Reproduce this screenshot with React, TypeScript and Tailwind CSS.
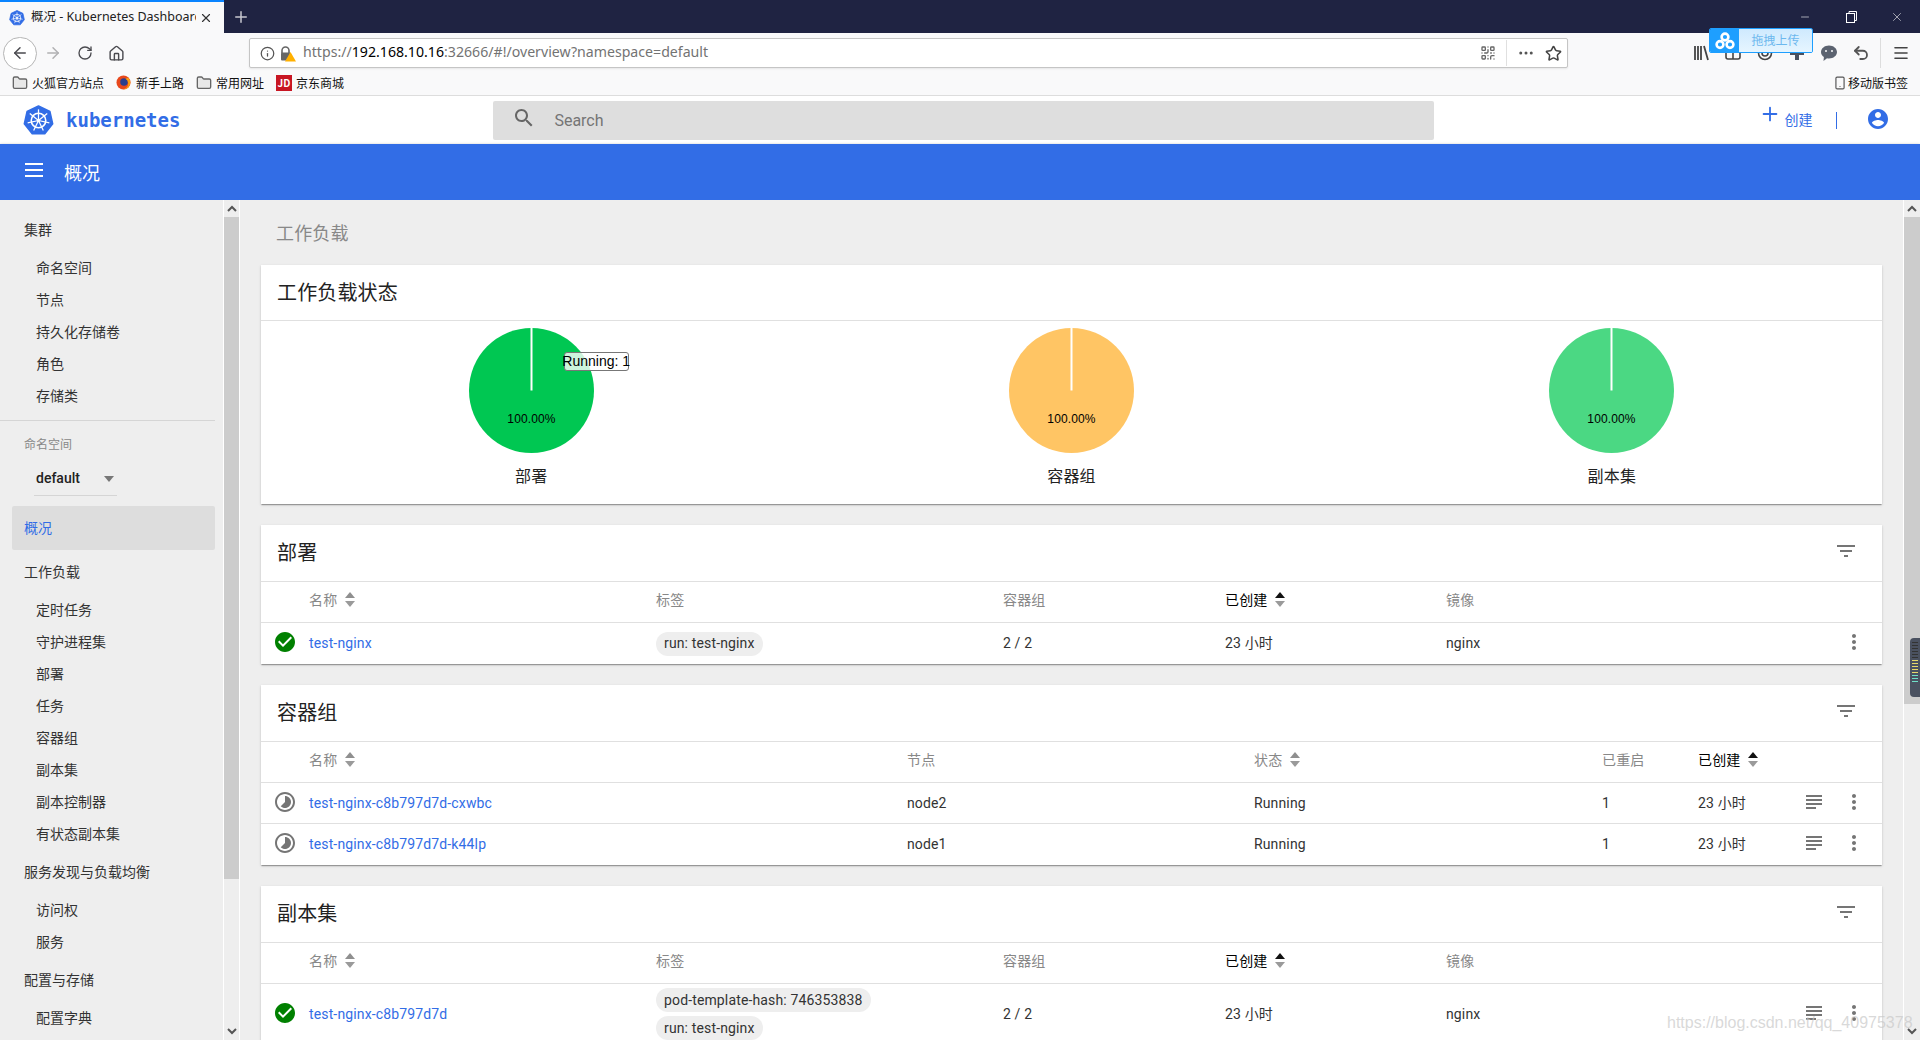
import React from 'react';
import { ArrowLeft, ArrowRight, RotateCw, Home, Info, Star, Ellipsis, QrCode, Undo2, Menu, Plus, X, Folder, Smartphone, Minus } from 'lucide-react';

const K8sLogo = ({ size, fill = '#326de6' }: { size: number; fill?: string }) => {
  const spokes = Array.from({ length: 7 }, (_, i) => {
    const a = ((-90 + i * (360 / 7)) * Math.PI) / 180;
    return { x: 16 + 11.5 * Math.cos(a), y: 16 + 11.5 * Math.sin(a) };
  });
  return (
    <svg width={size} height={size} viewBox="0 0 32 32">
      <polygon points="16,1 27.8,6.7 30.7,19.4 22.5,29.6 9.5,29.6 1.3,19.4 4.2,6.7" fill={fill} stroke={fill} strokeWidth="1.5" strokeLinejoin="round" />
      <circle cx="16" cy="16" r="7.5" fill="none" stroke="#fff" strokeWidth="1.6" />
      <circle cx="16" cy="16" r="1.8" fill="#fff" />
      {spokes.map((p, i) => (
        <line key={i} x1="16" y1="16" x2={p.x} y2={p.y} stroke="#fff" strokeWidth="1.3" />
      ))}
    </svg>
  );
};

const MatIcon = ({ d, size = 24, className }: { d: string; size?: number; className?: string }) => (
  <svg width={size} height={size} viewBox="0 0 24 24" className={className} fill="currentColor">
    <path d={d} />
  </svg>
);

const CHECK = 'M12 2C6.48 2 2 6.48 2 12s4.48 10 10 10 10-4.48 10-10S17.52 2 12 2zm-2 15l-5-5 1.41-1.41L10 14.17l7.59-7.59L19 8l-9 9z';
const TIMELAPSE = 'M16.24 7.76C15.07 6.59 13.54 6 12 6v6l-4.24 4.24c2.34 2.34 6.14 2.34 8.49 0 2.34-2.34 2.34-6.14-.01-8.48zM12 2C6.48 2 2 6.48 2 12s4.48 10 10 10 10-4.48 10-10S17.52 2 12 2zm0 18c-4.42 0-8-3.58-8-8s3.58-8 8-8 8 3.58 8 8-3.58 8-8 8z';
const ACCOUNT = 'M12 2C6.48 2 2 6.48 2 12s4.48 10 10 10 10-4.48 10-10S17.52 2 12 2zm0 3c1.66 0 3 1.34 3 3s-1.34 3-3 3-3-1.34-3-3 1.34-3 3-3zm0 14.2c-2.5 0-4.71-1.28-6-3.22.03-1.99 4-3.08 6-3.08 1.99 0 5.97 1.09 6 3.08-1.29 1.94-3.5 3.22-6 3.22z';
const FILTER = 'M10 18h4v-2h-4v2zM3 6v2h18V6H3zm3 7h12v-2H6v2z';
const SUBJECT = 'M14 17H4v2h10v-2zm6-8H4v2h16V9zM4 15h16v-2H4v2zM4 5v2h16V5H4z';
const DOTS = 'M12 8c1.1 0 2-.9 2-2s-.9-2-2-2-2 .9-2 2 .9 2 2 2zm0 2c-1.1 0-2 .9-2 2s.9 2 2 2 2-.9 2-2-.9-2-2-2zm0 6c-1.1 0-2 .9-2 2s.9 2 2 2 2-.9 2-2-.9-2-2-2z';
const SEARCH = 'M15.5 14h-.79l-.28-.27C15.41 12.59 16 11.11 16 9.5 16 5.91 13.09 3 9.5 3S3 5.91 3 9.5 5.91 16 9.5 16c1.61 0 3.09-.59 4.23-1.57l.27.28v.79l5 4.99L20.49 19l-4.99-5zm-6 0C7.01 14 5 11.99 5 9.5S7.01 5 9.5 5 14 7.01 14 9.5 11.99 14 9.5 14z';

const Sort = ({ active }: { active?: boolean }) => (
  <svg width="10" height="15" viewBox="0 0 10 15" className="ml-2 mb-[2px]">
    <polygon points="5,0 10,6 0,6" fill={active ? '#111' : '#8f8f8f'} />
    <polygon points="0,9 10,9 5,15" fill="#9a9a9a" />
  </svg>
);

const Th = ({ label, sort, active }: { label: string; sort?: boolean; active?: boolean }) => (
  <div className={`flex items-center pb-[3px] ${active ? 'text-black' : 'text-[#888]'}`}>
    {label}
    {sort && <Sort active={active} />}
  </div>
);

const Chip = ({ text }: { text: string }) => (
  <span className="inline-flex h-6 items-center rounded-xl bg-[#eee] px-2 text-[#333]">{text}</span>
);

const CardHeader = ({ title }: { title: string }) => (
  <div className="flex h-[57px] items-center justify-between border-b border-[#e0e0e0] pl-4 pr-[27px]">
    <h2 className="text-[20px] font-normal text-[#222]">{title}</h2>
    <MatIcon d={FILTER} className="mb-1 -mr-[3px] text-[#757575]" />
  </div>
);

const RowIcons = ({ logs }: { logs?: boolean }) => (
  <>
    <div className="flex items-center justify-center text-[#757575]">
      {logs && <MatIcon d={SUBJECT} className="mb-[3px]" />}
    </div>
    <div className="flex items-center justify-center text-[#757575]">
      <MatIcon d={DOTS} className="mb-[3px]" />
    </div>
  </>
);

const Pie = ({ color, label, tooltip }: { color: string; label: string; tooltip?: boolean }) => (
  <div className="flex flex-col items-center pt-[7px]">
    <div className="relative h-[125px] w-[125px]">
      <svg width="125" height="125" viewBox="0 0 125 125">
        <circle cx="62.5" cy="62.5" r="62.5" fill={color} />
        <line x1="62.5" y1="0" x2="62.5" y2="62.5" stroke="#fff" strokeWidth="2" />
        <text x="62.5" y="95" textAnchor="middle" fontSize="12" fill="#000" fontFamily="Liberation Sans, sans-serif">100.00%</text>
      </svg>
      {tooltip && (
        <div className="absolute left-[95px] top-6 flex h-[19px] w-[65px] items-center justify-center whitespace-nowrap rounded-[3px] border border-[#777] bg-white/80 font-['Liberation_Sans',sans-serif] text-[14px] tracking-normal text-black">
          Running: 1
        </div>
      )}
    </div>
    <div className="mt-[14px] text-[16px] leading-5 text-[#222]">{label}</div>
  </div>
);

const Sub = ({ children }: { children: string }) => (
  <div className="flex h-8 items-center pl-9 text-[#333]">{children}</div>
);
const Group = ({ children }: { children: string }) => (
  <div className="flex h-11 items-center pl-6 text-[#333]">{children}</div>
);

const ScrollTrack = ({ thumb }: { thumb: string }) => (
  <div className="flex h-full w-full flex-col bg-[#eee]">
    <div className="flex h-[17px] items-center justify-center text-[#555]">
      <svg width="10" height="7" viewBox="0 0 10 7"><path d="M1 6l4-4 4 4" fill="none" stroke="currentColor" strokeWidth="2" /></svg>
    </div>
    <div className={`bg-[#ccc] ${thumb}`} />
    <div className="mt-auto flex h-[17px] items-center justify-center text-[#555]">
      <svg width="10" height="7" viewBox="0 0 10 7"><path d="M1 1l4 4 4-4" fill="none" stroke="currentColor" strokeWidth="2" /></svg>
    </div>
  </div>
);

const App = () => {
  return (
    <div className="relative flex h-[1040px] w-[1920px] flex-col overflow-hidden bg-white font-['Roboto','Noto_Sans_CJK_SC',sans-serif] text-[14px]">
      {/* Browser tabs */}
      <div className="flex h-[33px] items-stretch bg-[#1f2342]">
        <div className="flex w-[224px] items-center border-t-2 border-[#0a84ff] bg-[#f9f9fa] pl-[9px] pr-2 text-[12.5px] text-[#222]">
          <K8sLogo size={16} />
          <span className="ml-[6px] w-[165px] overflow-hidden whitespace-nowrap font-['Noto_Sans','Noto_Sans_CJK_SC',sans-serif]">概况 - Kubernetes Dashboard</span>
          <X size={14} className="ml-[3px] text-[#333]" />
        </div>
        <div className="flex w-[34px] items-center justify-center text-[#c8c8d0]">
          <Plus size={18} />
        </div>
        <div className="ml-auto flex items-center text-white">
          <div className="flex w-[46px] justify-center"><Minus size={12} strokeWidth={1.2} /></div>
          <div className="flex w-[46px] justify-center">
            <svg width="11" height="12" viewBox="0 0 11 12" fill="none" stroke="currentColor"><rect x="0.5" y="2.5" width="8" height="9" /><path d="M3 2.5v-2h7.5v9H8.5" /></svg>
          </div>
          <div className="flex w-[46px] justify-center"><X size={14} strokeWidth={1} /></div>
        </div>
      </div>

      {/* Browser toolbar */}
      <div className="flex h-[38px] items-center bg-[#f9f9fa] pt-[2px] text-[#4a4a4f]">
        <div className="ml-[3px] flex h-[33px] w-[34px] items-center justify-center rounded-full border border-[#b5b5b5] bg-white">
          <ArrowLeft size={18} />
        </div>
        <ArrowRight size={18} className="ml-[7px] text-[#b1b1b3]" />
        <RotateCw size={16} className="ml-[15px]" />
        <Home size={17} className="ml-[15px]" />
        <div className="ml-[124px] flex h-[30px] w-[1319px] items-center rounded-[2px] border border-[#c5c5c5] bg-white shadow-[0_1px_2px_rgba(0,0,0,.08)]">
          <Info size={15} className="ml-[10px] text-[#555]" />
          <svg width="17" height="17" viewBox="0 0 17 17" className="ml-[4px]">
            <path d="M3 8V5.5a3.5 3.5 0 017 0V8" fill="none" stroke="#666" strokeWidth="1.6" />
            <rect x="2" y="7.5" width="9" height="8" rx="1" fill="#666" />
            <polygon points="11.5,7 17,16.5 6,16.5" fill="#ffb000" />
          </svg>
          <span className="mb-[2px] ml-[7px] whitespace-nowrap font-['Noto_Sans',sans-serif] text-[14.15px] text-[#737373]">
            https://<span className="text-black">192.168.10.16</span>:32666/#!/overview?namespace=default
          </span>
          <QrCode size={16} className="ml-auto mr-[-7px] text-[#666]" />
          <div className="ml-[17px] mr-[10px] h-[26px] w-px bg-[#e0e0e0]" />
          <Ellipsis size={18} className="text-[#555]" />
          <Star size={17} className="ml-[10px] mr-[5px] text-[#444]" strokeWidth={2.2} />
        </div>
        <div className="ml-[125px] flex items-center">
          <svg width="16" height="16" viewBox="0 0 16 16" stroke="#444" strokeWidth="1.8"><path d="M2 1v14M5 1v14M8 1v14M11 1l4 14" fill="none" /></svg>
          <svg width="16" height="14" viewBox="0 0 16 14" className="ml-[16px]" fill="none" stroke="#444" strokeWidth="1.6"><rect x="1" y="1" width="14" height="12" rx="2" /><path d="M8 1v12" /></svg>
          <svg width="16" height="16" viewBox="0 0 16 16" className="ml-[16px]" fill="none" stroke="#444" strokeWidth="1.6"><circle cx="8" cy="8" r="6.5" /><circle cx="8" cy="8" r="3" /></svg>
          <svg width="16" height="16" viewBox="0 0 16 16" className="ml-[16px]" fill="#4a5160"><path d="M6 1h4v5h5v4h-5v5H6v-5H1V6h5z" /></svg>
          <svg width="18" height="18" viewBox="0 0 18 18" className="ml-[15px]">
            <path d="M9 1.5c4.4 0 8 2.900 8 6.500s-3.600 6.500-8 6.500c-.7 0-1.300-.1-2-.2L3.500 17l.4-4.100C2 11.700 1 10 1 8c0-3.600 3.600-6.500 8-6.500z" fill="#5c6370" />
            <circle cx="6" cy="7" r="1" fill="#f9f9fa" /><circle cx="12" cy="7" r="1" fill="#f9f9fa" />
          </svg>
          <Undo2 size={18} className="ml-[14px] text-[#555]" strokeWidth={2.4} />
          <div className="ml-[10px] h-[30px] w-px bg-[#ddd]" />
          <Menu size={18} className="ml-[11px] text-[#444]" strokeWidth={2.2} />
        </div>
      </div>

      {/* Bookmarks */}
      <div className="flex h-[25px] items-center border-b border-[#ddd] bg-[#f9f9fa] pb-px pl-3 font-['Noto_Sans_CJK_SC',sans-serif] text-[12px] text-[#111]">
        <Folder size={16} className="fill-[#e8e8e8] text-[#666]" />
        <span className="ml-1 w-[84px]">火狐官方站点</span>
        <svg width="15" height="15" viewBox="0 0 16 16">
          <circle cx="8" cy="8" r="7.5" fill="#e8481c" />
          <circle cx="8.5" cy="7.5" r="4" fill="#2a3f8f" />
          <path d="M13 3a7 7 0 01-6 12 6 6 0 006-6 5 5 0 00-3-5z" fill="#ff9f10" />
        </svg>
        <span className="ml-[5px] w-[60px]">新手上路</span>
        <Folder size={16} className="fill-[#e8e8e8] text-[#666]" />
        <span className="ml-1 w-[60px]">常用网址</span>
        <div className="flex h-4 w-4 items-center justify-center bg-[#c81623] text-[10px] font-bold text-white">JD</div>
        <span className="ml-1">京东商城</span>
        <Smartphone size={14} className="ml-auto text-[#555]" />
        <span className="ml-px mr-3">移动版书签</span>
      </div>

      {/* Dashboard header */}
      <header className="flex h-12 items-center bg-white">
        <div className="ml-[23px]"><K8sLogo size={31} /></div>
        <span className="ml-3 font-['DejaVu_Sans_Mono',monospace] text-[19px] font-bold text-[#326de6]">kubernetes</span>
        <div className="ml-[313px] flex h-[39px] w-[941px] items-center rounded-[2px] bg-[#dedede]">
          <MatIcon d={SEARCH} className="ml-[19px] mb-1 text-[#666]" />
          <span className="ml-[18px] mt-[2px] text-[16px] text-[#757575]">Search</span>
        </div>
        <Plus size={22} className="ml-[325px] mb-3 text-[#326de6]" />
        <span className="ml-[3px] text-[#326de6]">创建</span>
        <div className="ml-6 h-[17px] w-px bg-[#326de6]" />
        <MatIcon d={ACCOUNT} className="ml-[29px] mb-[2px] text-[#326de6]" />
      </header>

      <div className="flex h-14 items-center bg-[#326de6] pl-[25px] text-white shadow-[0_1px_3px_rgba(0,0,0,.4)]">
        <svg width="18" height="14" viewBox="0 0 18 14" fill="currentColor" className="mb-1"><path d="M0 0h18v2H0zM0 6h18v2H0zM0 12h18v2H0z" /></svg>
        <span className="ml-[21px] mt-[2px] text-[18px]">概况</span>
      </div>

      <div className="flex min-h-0 flex-1">
        {/* Sidebar */}
        <aside className="w-[223px] bg-[#eee] pt-2 text-[14px]">
          <Group>集群</Group>
          <Sub>命名空间</Sub>
          <Sub>节点</Sub>
          <Sub>持久化存储卷</Sub>
          <Sub>角色</Sub>
          <Sub>存储类</Sub>
          <div className="mr-2 mt-2 border-b border-[#d5d5d5]" />
          <div className="flex h-[47px] items-center pt-px pl-6 text-[12px] text-[#888]">命名空间</div>
          <div className="ml-[34px] flex h-[28px] w-[83px] items-start justify-between border-b border-[#d5d5d5] pl-[2px] pr-[3px] font-medium text-[#222]">
            default
            <svg width="10" height="6" viewBox="0 0 10 6" className="mt-[8px]"><polygon points="0,0 10,0 5,6" fill="#777" /></svg>
          </div>
          <div className="ml-3 mr-2 mt-[10px] flex h-11 items-center rounded-[2px] bg-[#ddd] pl-3 text-[#326de6]">概况</div>
          <Group>工作负载</Group>
          <Sub>定时任务</Sub>
          <Sub>守护进程集</Sub>
          <Sub>部署</Sub>
          <Sub>任务</Sub>
          <Sub>容器组</Sub>
          <Sub>副本集</Sub>
          <Sub>副本控制器</Sub>
          <Sub>有状态副本集</Sub>
          <Group>服务发现与负载均衡</Group>
          <Sub>访问权</Sub>
          <Sub>服务</Sub>
          <Group>配置与存储</Group>
          <Sub>配置字典</Sub>
        </aside>
        <div className="w-[17px] border-x border-white">
          <ScrollTrack thumb="h-[662px]" />
        </div>

        {/* Main */}
        <main className="min-w-0 flex-1 overflow-hidden bg-[#eee] pl-[21px] pr-[21px] tracking-[0.14px]">
          <div className="flex h-[65px] items-center pl-[15px] pt-[2px] text-[18px] text-[#888]">工作负载</div>

          <section className="mb-[21px] bg-white shadow-[0_2px_1px_-1px_rgba(0,0,0,.2),0_1px_1px_0_rgba(0,0,0,.14),0_1px_3px_0_rgba(0,0,0,.12)]">
            <div className="flex h-14 items-center border-b border-[#e0e0e0] pl-4 text-[20px] text-[#222]">工作负载状态</div>
            <div className="grid h-[183px] grid-cols-3">
              <Pie color="#00c752" label="部署" tooltip />
              <Pie color="#ffc564" label="容器组" />
              <Pie color="#4bd883" label="副本集" />
            </div>
          </section>

          <section className="mb-[21px] bg-white shadow-[0_2px_1px_-1px_rgba(0,0,0,.2),0_1px_1px_0_rgba(0,0,0,.14),0_1px_3px_0_rgba(0,0,0,.12)]">
            <CardHeader title="部署" />
            <div className="grid h-[41px] grid-cols-[48px_347px_347px_222px_221px_356px_24px_56px] border-b border-[#e0e0e0]">
              <div />
              <Th label="名称" sort />
              <Th label="标签" />
              <Th label="容器组" />
              <Th label="已创建" sort active />
              <Th label="镜像" />
            </div>
            <div className="grid h-[41px] grid-cols-[48px_347px_347px_222px_221px_356px_24px_56px] text-[#333]">
              <div className="flex items-center justify-center text-[#008000]"><MatIcon d={CHECK} className="mb-[3px]" /></div>
              <div className="flex items-center text-[#326de6]">test-nginx</div>
              <div className="flex items-center"><Chip text="run: test-nginx" /></div>
              <div className="flex items-center">2 / 2</div>
              <div className="flex items-center">23 小时</div>
              <div className="flex items-center">nginx</div>
              <RowIcons />
            </div>
          </section>

          <section className="mb-[21px] bg-white shadow-[0_2px_1px_-1px_rgba(0,0,0,.2),0_1px_1px_0_rgba(0,0,0,.14),0_1px_3px_0_rgba(0,0,0,.12)]">
            <CardHeader title="容器组" />
            <div className="grid h-[41px] grid-cols-[48px_598px_347px_348px_96px_104px_24px_56px] border-b border-[#e0e0e0]">
              <div />
              <Th label="名称" sort />
              <Th label="节点" />
              <Th label="状态" sort />
              <Th label="已重启" />
              <Th label="已创建" sort active />
            </div>
            {[
              { name: 'test-nginx-c8b797d7d-cxwbc', node: 'node2' },
              { name: 'test-nginx-c8b797d7d-k44lp', node: 'node1' },
            ].map((pod, i) => (
              <div key={pod.name} className={`grid h-[41px] grid-cols-[48px_598px_347px_348px_96px_104px_24px_56px] text-[#333] ${i === 0 ? 'border-b border-[#e0e0e0]' : ''}`}>
                <div className="flex items-center justify-center text-[#757575]"><MatIcon d={TIMELAPSE} className="mb-[3px]" /></div>
                <div className="flex items-center text-[#326de6]">{pod.name}</div>
                <div className="flex items-center">{pod.node}</div>
                <div className="flex items-center">Running</div>
                <div className="flex items-center">1</div>
                <div className="flex items-center">23 小时</div>
                <RowIcons logs />
              </div>
            ))}
          </section>

          <section className="bg-white shadow-[0_2px_1px_-1px_rgba(0,0,0,.2),0_1px_1px_0_rgba(0,0,0,.14),0_1px_3px_0_rgba(0,0,0,.12)]">
            <CardHeader title="副本集" />
            <div className="grid h-[41px] grid-cols-[48px_347px_347px_222px_221px_356px_24px_56px] border-b border-[#e0e0e0]">
              <div />
              <Th label="名称" sort />
              <Th label="标签" />
              <Th label="容器组" />
              <Th label="已创建" sort active />
              <Th label="镜像" />
            </div>
            <div className="grid h-[60px] grid-cols-[48px_347px_347px_222px_221px_356px_24px_56px] text-[#333]">
              <div className="flex items-center justify-center text-[#008000]"><MatIcon d={CHECK} className="mb-[3px]" /></div>
              <div className="flex items-center text-[#326de6]">test-nginx-c8b797d7d</div>
              <div className="flex flex-col items-start gap-1 pt-1">
                <Chip text="pod-template-hash: 746353838" />
                <Chip text="run: test-nginx" />
              </div>
              <div className="flex items-center">2 / 2</div>
              <div className="flex items-center">23 小时</div>
              <div className="flex items-center">nginx</div>
              <RowIcons logs />
            </div>
          </section>
        </main>

        <div className="w-[17px] border-l border-white">
          <ScrollTrack thumb="h-[487px]" />
        </div>
      </div>

      {/* Floating overlays: upload widget, side meter, watermark */}
      <div className="absolute left-[1709px] top-7 flex h-[25px] w-[104px] overflow-hidden rounded-[2px] border border-[#1e9fff] text-[12px]">
        <div className="flex w-[29px] items-center justify-center bg-[#1e9fff]">
          <svg width="20" height="18" viewBox="0 0 20 18" fill="none" stroke="#fff" strokeWidth="2.6">
            <circle cx="10" cy="5" r="3.4" /><circle cx="5" cy="12.5" r="3.4" /><circle cx="15" cy="12.5" r="3.4" />
          </svg>
        </div>
        <div className="flex flex-1 items-center justify-center bg-gradient-to-b from-[#cfeafe] to-[#e6f5ff] text-[#6cb8ee]">拖拽上传</div>
      </div>
      <div className="absolute left-[1910px] top-[638px] flex h-[59px] w-[10px] flex-col gap-[2px] rounded-l bg-[#4a5160] py-1 pl-[2px]">
        {['#333', '#333', '#333', '#333', '#333', '#333', '#e6d86a', '#e6d86a', '#e6d86a', '#e6d86a', '#e6d86a', '#6fe0c8', '#6fe0c8', '#6fe0c8'].map((c, i) => (
          <div key={i} className="h-px w-[6px]" style={{ backgroundColor: c }} />
        ))}
      </div>
      <div className="pointer-events-none absolute left-[1667px] top-[1011px] whitespace-nowrap font-['Liberation_Sans',sans-serif] text-[16px] text-[#c8c8c8]/70">
        https://blog.csdn.net/qq_40975378
      </div>
    </div>
  );
};

export default App;
